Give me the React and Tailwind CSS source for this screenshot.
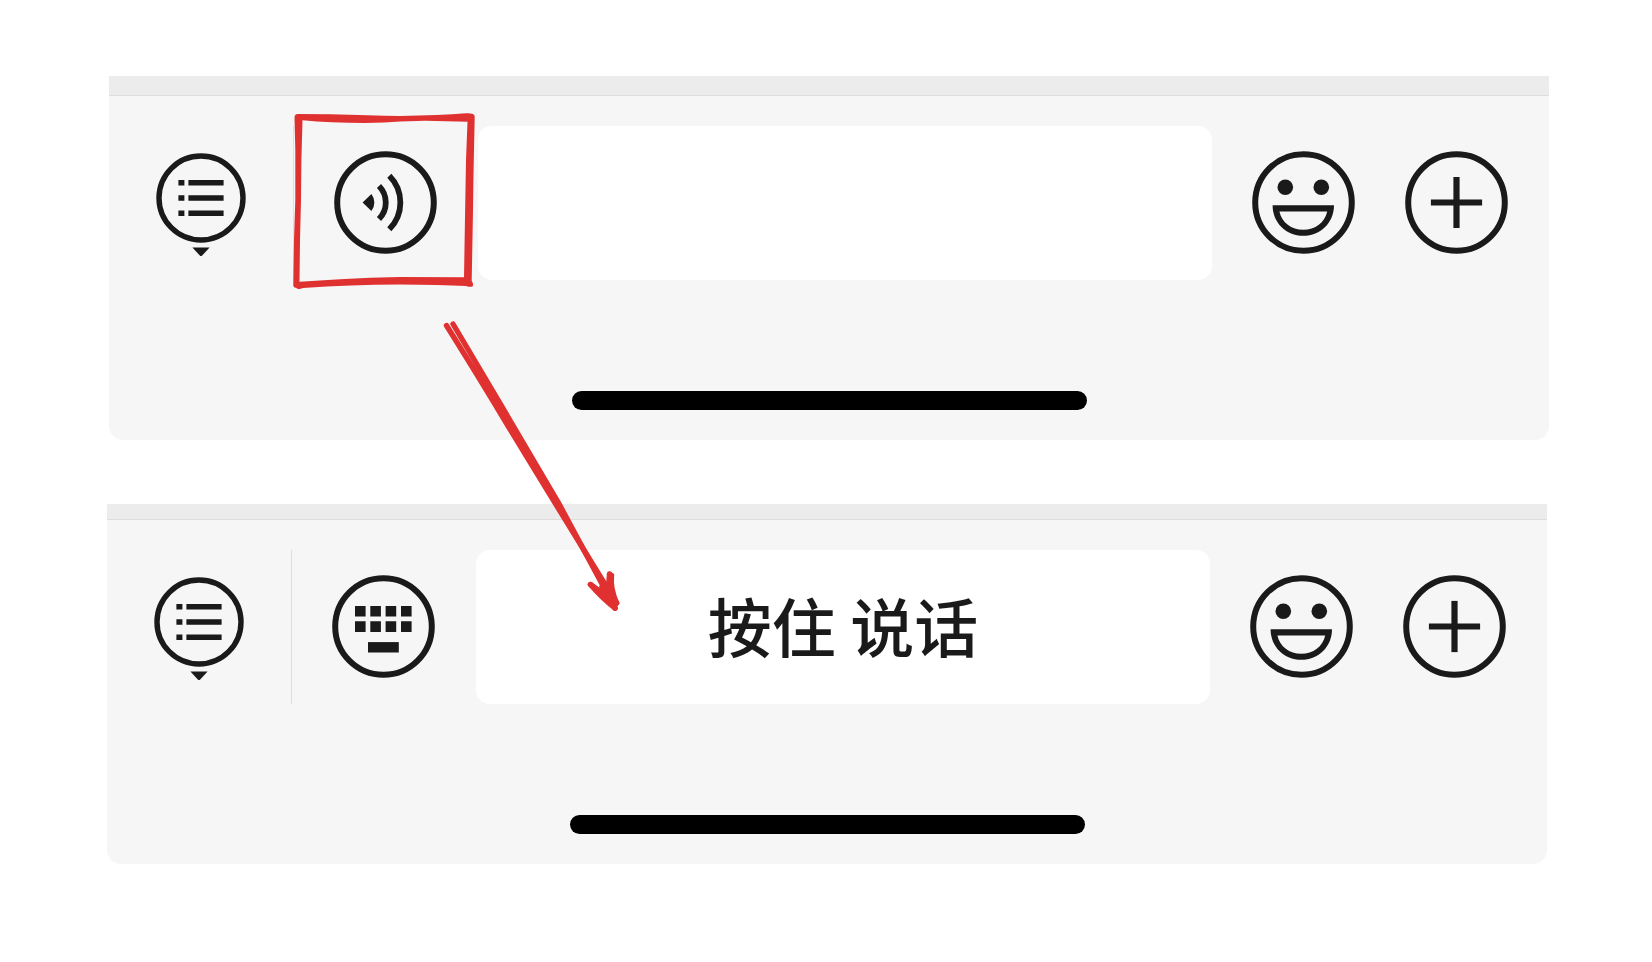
function ListIcon() {
  return (
    <svg width="90" height="108" viewBox="0 0 90 108" fill="#1a1a1a" aria-hidden="true">
      <circle cx="45" cy="49" r="42" fill="none" stroke="#1a1a1a" strokeWidth="5.4" />
      <path d="M22.4 31h6v5.6h-6zM32.4 31h35.2v5.6h-35.2zM22.4 46.2h6v5.6h-6zM32.4 46.2h35.2v5.6h-35.2zM22.4 61.4h6v5.6h-6zM32.4 61.4h35.2v5.6h-35.2z" />
      <path d="M36.4 98.4h17.2l-7.4 8q-1.2 1.2-2.4 0z" />
    </svg>
  );
}

function RoundIcon({ children }) {
  return (
    <svg width="104" height="104" viewBox="0 0 104 104" fill="#1a1a1a" aria-hidden="true">
      <circle cx="51.5" cy="51.5" r="48.3" fill="none" stroke="#1a1a1a" strokeWidth="6" />
      {children}
    </svg>
  );
}

function VoiceIcon() {
  return (
    <RoundIcon>
      <path d="M28.6 51.5l8.8-8.6a14 14 0 0 1 0 17.2z" />
      <g fill="none" stroke="#1a1a1a" strokeWidth="5.8">
        <path d="M45 35a23.5 23.5 0 0 1 0 33" />
        <path d="M55.3 24.7a38 38 0 0 1 0 53.6" />
      </g>
    </RoundIcon>
  );
}

function KeyboardIcon() {
  return (
    <RoundIcon>
      <path d="M23 31h10.6v10.6H23zM38.3 31h10.6v10.6H38.3zM53.6 31h10.6v10.6H53.6zM69 31h10.6v10.6H69z" />
      <path d="M23 46.3h10.6v10.6H23zM38.3 46.3h10.6v10.6H38.3zM53.6 46.3h10.6v10.6H53.6zM69 46.3h10.6v10.6H69z" />
      <path d="M36 67.1h30.8v10.4H36z" />
    </RoundIcon>
  );
}

function SmileIcon() {
  return (
    <RoundIcon>
      <circle cx="33.3" cy="36.2" r="7.8" />
      <circle cx="69.3" cy="36.2" r="7.8" />
      <path
        fillRule="evenodd"
        d="M20.6 54.2h61.4c0 17.5-13.4 30.6-30.7 30.6S20.6 71.7 20.6 54.2zM27.4 60.4c2.4 11 12 18.4 23.9 18.4s21.5-7.4 23.9-18.4z"
      />
    </RoundIcon>
  );
}

function PlusIcon() {
  return (
    <RoundIcon>
      <path d="M48.4 25.9h6.2v51.2h-6.2z" />
      <path d="M25.9 48.4h51.2v6.2H25.9z" />
    </RoundIcon>
  );
}

function IconButton({ label, children }) {
  return (
    <button type="button" aria-label={label} className="shrink-0">
      {children}
    </button>
  );
}

function ChatBar({ strip, mode, children }) {
  return (
    <section className="overflow-hidden rounded-b-[14px] bg-[#f6f6f6]">
      <div className={strip} />
      <div className="flex items-center border-t border-[#dedede] pt-[30px] pr-10 pl-[47px]">
        <IconButton label="菜单">
          <ListIcon />
        </IconButton>
        <div className="mr-10 ml-[47px] w-px shrink-0 self-stretch bg-[#dedede]" />
        <IconButton label={mode}>{mode === "语音" ? <VoiceIcon /> : <KeyboardIcon />}</IconButton>
        <div className="mx-10 flex h-[154px] min-w-0 flex-1">{children}</div>
        <div className="flex shrink-0 gap-[49px]">
          <IconButton label="表情">
            <SmileIcon />
          </IconButton>
          <IconButton label="更多">
            <PlusIcon />
          </IconButton>
        </div>
      </div>
      <div className="mx-auto mt-[111px] mb-[30px] h-[19px] w-[515px] rounded-full bg-black" />
    </section>
  );
}

function Annotation() {
  return (
    <svg
      className="pointer-events-none absolute top-0 left-0"
      width="660"
      height="640"
      viewBox="0 0 660 640"
      aria-hidden="true"
    >
      <path
        fill="#e03131"
        fillRule="evenodd"
        d="M294.5 117Q295 113.7 298 114L330 114.3Q370 115.5 400 116Q440 115.5 466 113.3Q474.5 112.8 474.7 116.5L474 150Q473.3 180 473 210L471.7 281Q474 284 472.5 286.5Q470 287.4 466 286Q440 284.8 400 284.5Q350 284.5 303 288Q298 290 296 287.7Q293 288 293.3 284L294 240L295.3 200L295.3 150ZM302.5 120.3Q330 123 365 123Q385 122.6 400 121.5L425 120.8L467.5 121.8L466 160L465.3 200L464 277.3L400 277Q370 277.4 340 279.2L299.5 281.8L300 240L301 200L301.4 160Z"
      />
      <path fill="#e03131" d="M467 352L501 415L554 500L557 500L508 417L472 355z" />
      <g fill="none" stroke="#e03131" strokeWidth="5.4" strokeLinecap="round" strokeLinejoin="round">
        <path d="M446.5 325.5Q480 379 501.5 415T616.5 603" />
        <path d="M453 324Q481 371 508 417L558 502L615 608" />
        <path d="M590.5 584.5Q602 598 615 608" />
        <path d="M590.5 584.5Q603 594 616.5 603" />
        <path d="M609.5 574Q607 590 615 608" />
        <path d="M611.5 575.5Q610 588 616.5 603" />
        <path d="M602 587L613 602" />
        <path d="M606 585L613 602" />
      </g>
    </svg>
  );
}

export default function App() {
  return (
    <main className="relative min-h-screen min-w-[1000px] bg-white pt-[76px]">
      <div className="pr-[103px] pl-[109px]">
        <ChatBar strip="h-[19px] bg-[#ececec]" mode="语音">
          <input
            type="text"
            aria-label="消息"
            className="w-full rounded-[14px] bg-white px-6 font-['Noto_Sans_CJK_SC',sans-serif] text-[64px] text-[#1a1a1a] outline-none"
          />
        </ChatBar>
      </div>
      <div className="mt-16 pr-[105px] pl-[107px]">
        <ChatBar strip="h-[15px] bg-[#ececec]" mode="键盘">
          <button
            type="button"
            className="w-full rounded-[14px] bg-white pb-1.5 font-['Noto_Sans_CJK_SC',sans-serif] text-[64px] leading-none font-medium text-[#1a1a1a]"
          >
            按住 说话
          </button>
        </ChatBar>
      </div>
      <Annotation />
    </main>
  );
}
